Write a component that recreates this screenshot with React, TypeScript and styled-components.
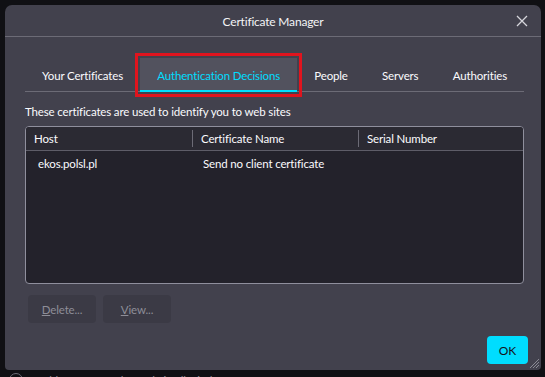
import styled, { createGlobalStyle } from 'styled-components';

const GlobalStyle = createGlobalStyle`
  html, body {
    margin: 0;
    padding: 0;
    background: #101014;
    overflow: hidden;
  }
  body {
    font-family: Lato, 'Open Sans', sans-serif;
    font-size: 11.5px;
    letter-spacing: -0.15px;
  }
`;

const tabs = ['Your Certificates', 'Authentication Decisions', 'People', 'Servers', 'Authorities'];
const columns = ['Host', 'Certificate Name', 'Serial Number'];
const rows = [{ host: 'ekos.polsl.pl', name: 'Send no client certificate', serial: '' }];

const App = () => {
  return (
    <>
      <GlobalStyle />
      <Page>
        <Dialog>
          <TitleBar>
            <Title>Certificate Manager</Title>
            <CloseButton aria-label="Close">
              <svg width="12" height="12" viewBox="0 0 12 12">
                <path d="M1 1L11 11M11 1L1 11" stroke="#d6d6dc" strokeWidth="1.3" fill="none" />
              </svg>
            </CloseButton>
          </TitleBar>
          <Body>
            <TabList>
              {tabs.map((tab, i) => (
                <Tab key={tab} $selected={i === 1}>
                  {tab}
                </Tab>
              ))}
            </TabList>
            <Description>These certificates are used to identify you to web sites</Description>
            <Table>
              <HeaderRow>
                {columns.map((col, i) => (
                  <HeaderCell key={col} $first={i === 0}>
                    {col}
                  </HeaderCell>
                ))}
              </HeaderRow>
              {rows.map((row) => (
                <Row key={row.host}>
                  <Cell $first>{row.host}</Cell>
                  <Cell>{row.name}</Cell>
                  <Cell>{row.serial}</Cell>
                </Row>
              ))}
            </Table>
            <ButtonRow>
              <GhostButton disabled>
                <u>D</u>elete...
              </GhostButton>
              <GhostButton disabled>
                <u>V</u>iew...
              </GhostButton>
            </ButtonRow>
            <Footer>
              <PrimaryButton>OK</PrimaryButton>
            </Footer>
          </Body>
          <ResizeGrip width="11" height="11" viewBox="0 0 11 11">
            <path d="M10 1L1 10M10 4L4 10M10 7L7 10" stroke="#8a8a94" strokeWidth="1" />
          </ResizeGrip>
        </Dialog>
        <BehindRow>
          <Radio />
          <span>Enable HTTPS-Only Mode in all windows</span>
        </BehindRow>
      </Page>
    </>
  );
};

export default App;

const Page = styled.div`
  padding: 5px 4px 0 5px;
`;

const Dialog = styled.div`
  position: relative;
  width: 536px;
  height: 365px;
  background: #42414d;
  border-radius: 7px 7px 4px 4px;
  color: #fbfbfe;
  display: flex;
  flex-direction: column;
`;

const TitleBar = styled.div`
  position: relative;
  height: 32px;
  padding-top: 1px;
  box-sizing: border-box;
  border-bottom: 1px solid #6c6b76;
  display: flex;
  align-items: center;
  justify-content: center;
`;

const Title = styled.span`
  font-size: 12px;
  letter-spacing: -0.2px;
  color: #f4f4f6;
`;

const CloseButton = styled.button`
  position: absolute;
  right: 13px;
  top: 10px;
  width: 12px;
  height: 12px;
  padding: 0;
  border: none;
  background: none;
  display: flex;
`;

const Body = styled.div`
  flex: 1;
  display: flex;
  flex-direction: column;
  padding: 21px 17px 6px 20px;
`;

const TabList = styled.div`
  display: flex;
  justify-content: space-between;
  border-bottom: 1px solid #6c6b76;
`;

const Tab = styled.div<{ $selected?: boolean }>`
  position: relative;
  height: 34px;
  padding: 3px 17px 0;
  box-sizing: border-box;
  display: flex;
  align-items: center;
  white-space: nowrap;
  color: ${(p) => (p.$selected ? '#00ddff' : '#fbfbfe')};
  background: ${(p) => (p.$selected ? '#52525e' : 'transparent')};
  border-bottom: ${(p) => (p.$selected ? '2px solid #00ddff' : '2px solid transparent')};
  margin-bottom: -1px;
  outline: ${(p) => (p.$selected ? '3px solid #e0141e' : 'none')};
  outline-offset: 2px;
`;

const Description = styled.div`
  margin-top: 12px;
  line-height: 15px;
`;

const Table = styled.div`
  margin-top: 7px;
  height: 156px;
  border: 1px solid #8f8f9d;
  border-radius: 4px;
  background: #23222b;
  overflow: hidden;
`;

const HeaderRow = styled.div`
  display: grid;
  grid-template-columns: 166px 166px 1fr;
  height: 23px;
  background: #2b2a33;
  border-bottom: 1px solid #5e5d68;
  align-items: center;
`;

const HeaderCell = styled.div<{ $first?: boolean }>`
  padding-left: 8px;
  border-left: ${(p) => (p.$first ? 'none' : '1px solid #6c6b76')};
  line-height: 17px;
`;

const Row = styled.div`
  display: grid;
  grid-template-columns: 166px 166px 1fr;
  height: 24px;
  align-items: center;
`;

const Cell = styled.div<{ $first?: boolean }>`
  padding-left: ${(p) => (p.$first ? '12px' : '11px')};
`;

const ButtonRow = styled.div`
  display: flex;
  gap: 7px;
  margin-top: 11px;
  padding-left: 3px;
`;

const GhostButton = styled.button`
  width: 68px;
  height: 28px;
  border: none;
  border-radius: 4px;
  background: #3b3a45;
  color: #8e8e98;
  font-family: Lato, 'Open Sans', sans-serif;
  font-size: 11.5px;
  letter-spacing: -0.15px;
  padding: 0;
`;

const Footer = styled.div`
  margin-top: auto;
  display: flex;
  justify-content: flex-end;
`;

const PrimaryButton = styled.button`
  width: 41px;
  height: 28px;
  margin-right: -4px;
  border: none;
  border-radius: 4px;
  background: #00ddff;
  color: #15141a;
  font-family: Lato, 'Open Sans', sans-serif;
  font-size: 12px;
  padding: 0;
`;

const ResizeGrip = styled.svg`
  position: absolute;
  right: 1px;
  bottom: 1px;
`;

const BehindRow = styled.div`
  display: flex;
  align-items: center;
  gap: 8px;
  margin-top: 3px;
  padding-left: 4px;
  color: #8b8b94;
`;

const Radio = styled.span`
  width: 12px;
  height: 12px;
  border: 1px solid #6c6b76;
  border-radius: 50%;
`;
